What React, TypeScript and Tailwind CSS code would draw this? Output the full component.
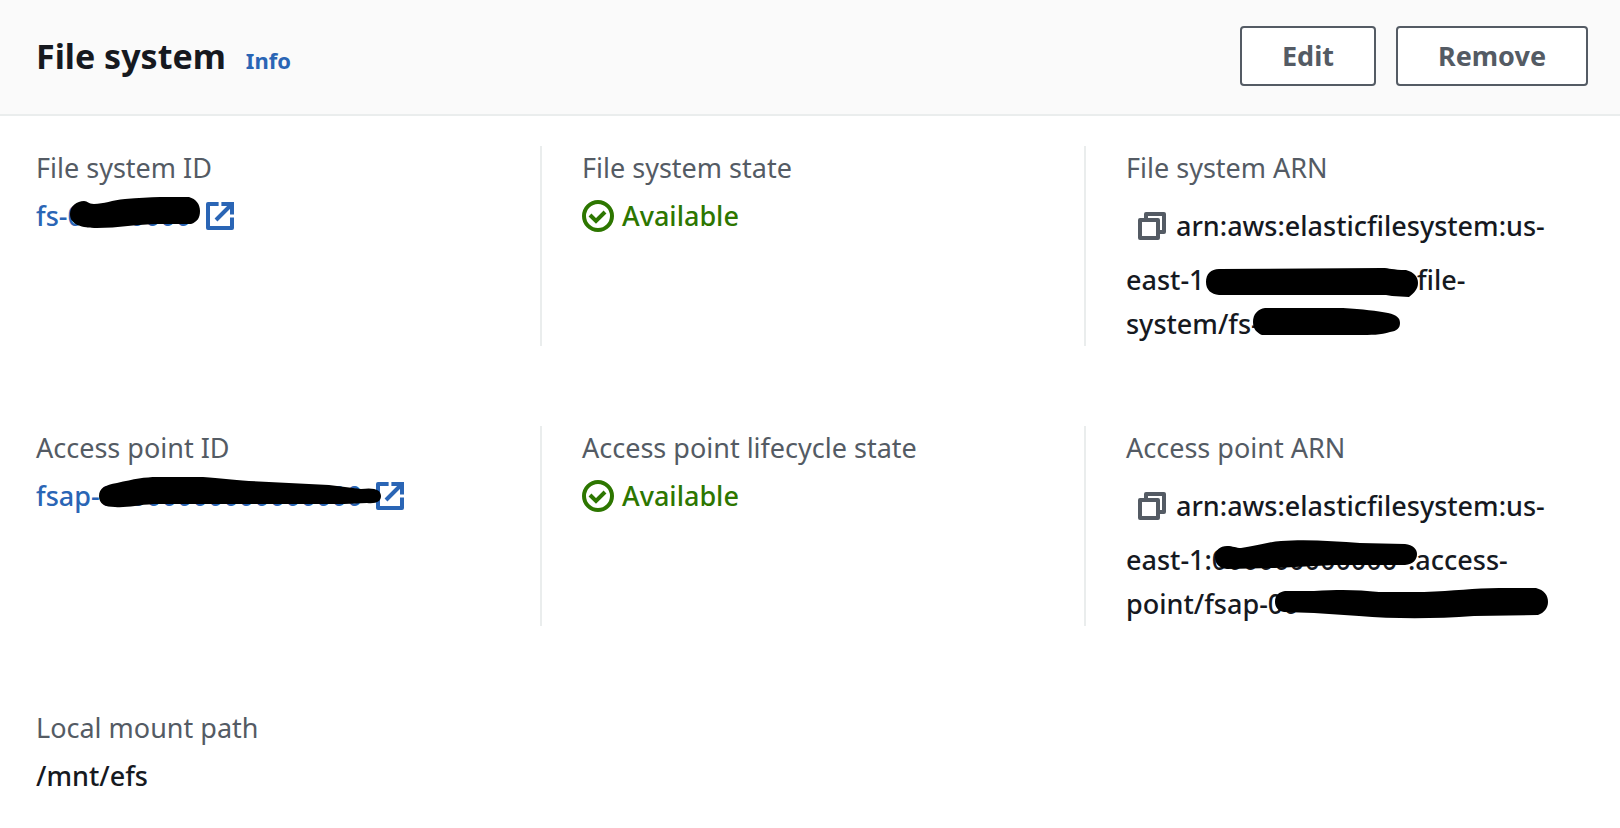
import React from "react";

type Stroke = { width: number; height: number; className: string; d: string };

const strokes = {
  fileSystemId: {
    width: 132,
    height: 34,
    className: "left-[34px] top-[3px]",
    d: "M0 17 C0 9 7 4 14 4 C18 4 18 7 24 7 C34 7 42 3 55 2 C68 1 80 0 90 0 L119 0 C126 2 130 7 130 14 C130 21 127 25 121 27 L88 27 C68 27 48 31 27 31 C12 31 0 28 0 17 Z",
  },
  accessPointId: {
    width: 284,
    height: 32,
    className: "left-[63px] top-[3px]",
    d: "M0 19 C0 11 6 8 18 6 C35 2 46 0 58 0 L104 0 C122 1 132 3 150 4 L230 8 L262 12 C276 10 282 13 282 19 C282 24 278 27 268 26 L245 27 L55 27 C38 28 27 31 16 30 C6 30 0 27 0 19 Z",
  },
  fileSystemArnAccount: {
    width: 214,
    height: 31,
    className: "left-[80px] top-[10px]",
    d: "M0 14 C0 6 5 1 13 1 L176 0 C184 0 186 2 200 2 C208 4 212 9 212 15 C212 21 208 25 203 29 L186 28 L180 27 L13 27 C5 26 0 22 0 14 Z",
  },
  fileSystemArnId: {
    width: 149,
    height: 29,
    className: "left-[127px] top-[6px]",
    d: "M0 14 C0 6 5 1 12 0 L90 0 C110 1 124 3 135 5 C144 7 147 10 147 15 C147 20 144 23 137 24 C128 27 118 27 105 27 L9 27 C4 25 0 21 0 14 Z",
  },
  accessPointArnAccount: {
    width: 203,
    height: 30,
    className: "left-[89px] top-[2px]",
    d: "M0 17 C0 10 5 6 12 6 C18 6 21 8 26 8 C42 6 52 2 66 1 C90 -1 120 1 145 3 L190 4 C198 5 202 9 202 14 C202 20 198 24 190 25 L120 25 L60 28 L12 29 C4 28 0 24 0 17 Z",
  },
  accessPointArnId: {
    width: 276,
    height: 32,
    className: "left-[148px] top-[6px]",
    d: "M1 14 C1 7 5 4 11 3 L40 3 C70 1 85 2 105 4 L150 4 C180 3 200 0 225 0 L262 0 C270 2 274 7 274 14 C274 20 270 25 264 27 L200 28 C160 31 120 31 85 28 L40 25 L10 24 C4 23 1 19 1 14 Z",
  },
};

function Redaction({ width, height, className, d }: Stroke) {
  return (
    <svg
      aria-hidden="true"
      width={width}
      height={height}
      viewBox={`0 0 ${width} ${height}`}
      className={`absolute ${className}`}
    >
      <path d={d} fill="#000" />
    </svg>
  );
}

function ExternalIcon() {
  return (
    <svg
      aria-hidden="true"
      viewBox="0 0 32 32"
      className="size-8 shrink-0"
      fill="none"
      stroke="currentColor"
      strokeWidth="4"
    >
      <path d="M14.6 4H4v24h24V17.4" strokeLinejoin="round" />
      <path d="M17.4 4H28v10.6M28 4 12 20" />
    </svg>
  );
}

function CheckIcon() {
  return (
    <svg
      aria-hidden="true"
      viewBox="0 0 32 32"
      className="size-8 shrink-0"
      fill="none"
      stroke="currentColor"
      strokeWidth="4"
    >
      <circle cx="16" cy="16" r="14" />
      <path d="m8 15 6 6 9-9" />
    </svg>
  );
}

function CopyIcon() {
  return (
    <svg
      aria-hidden="true"
      viewBox="0 0 32 32"
      className="size-8"
      fill="none"
      stroke="currentColor"
      strokeWidth="4"
      strokeLinejoin="round"
    >
      <path d="M4 10h18v18H4z" />
      <path d="M10 10V4h18v18h-6" />
    </svg>
  );
}

function Field({
  label,
  divided = true,
  children,
}: {
  label: string;
  divided?: boolean;
  children: React.ReactNode;
}) {
  return (
    <div className={divided ? "border-l-2 border-[#eaeded] pl-10" : ""}>
      <dt className="text-[#545b64]">{label}</dt>
      <dd className="mt-1 font-medium">{children}</dd>
    </div>
  );
}

function Available() {
  return (
    <span className="flex items-center gap-2 text-[#2d7600]">
      <CheckIcon />
      Available
    </span>
  );
}

function ArnStart({ label }: { label: string }) {
  return (
    <div className="flex h-16 items-center gap-2 pl-[10px]">
      <button type="button" aria-label={label} className="text-[#545b64]">
        <CopyIcon />
      </button>
      <span>arn:aws:elasticfilesystem:us-</span>
    </div>
  );
}

function HeaderButton({ children }: { children: React.ReactNode }) {
  return (
    <button
      type="button"
      className="h-[60px] rounded-[4px] border-2 border-[#545b64] bg-white px-10 font-bold text-[#545b64]"
    >
      {children}
    </button>
  );
}

export default function App() {
  return (
    <section className="min-h-screen bg-white font-['Noto_Sans',sans-serif] text-[27px] leading-[44px] text-[#16191f]">
      <header className="flex items-start justify-between border-b-2 border-[#eaeded] bg-[#fafafa] pt-[26px] pr-8 pb-7 pl-9">
        <div className="flex items-baseline gap-5 pt-2">
          <h2 className="text-[34px] font-bold">File system</h2>
          <a href="#info" className="text-[22px] font-bold text-[#2a65b5]">
            Info
          </a>
        </div>
        <div className="flex gap-5">
          <HeaderButton>Edit</HeaderButton>
          <HeaderButton>Remove</HeaderButton>
        </div>
      </header>

      <dl className="grid grid-cols-[504fr_544fr_536fr] gap-y-20 pt-[30px] pb-5 pl-9">
        <Field label="File system ID" divided={false}>
          <a href="#file-system" className="relative flex items-center text-[#2a65b5]">
            <span className="w-[168px]">fs-00000000</span>
            <ExternalIcon />
            <Redaction {...strokes.fileSystemId} />
          </a>
        </Field>
        <Field label="File system state">
          <Available />
        </Field>
        <Field label="File system ARN">
          <ArnStart label="Copy file system ARN" />
          <div className="relative flex">
            <span className="w-[291px]">east-1</span>
            <span>file-</span>
            <Redaction {...strokes.fileSystemArnAccount} />
          </div>
          <div className="relative">
            system/fs-
            <Redaction {...strokes.fileSystemArnId} />
          </div>
        </Field>

        <Field label="Access point ID" divided={false}>
          <a href="#access-point" className="relative flex items-center text-[#2a65b5]">
            <span className="w-[338px]">fsap-00000000000000000</span>
            <ExternalIcon />
            <Redaction {...strokes.accessPointId} />
          </a>
        </Field>
        <Field label="Access point lifecycle state">
          <Available />
        </Field>
        <Field label="Access point ARN">
          <ArnStart label="Copy access point ARN" />
          <div className="relative flex">
            <span className="w-[282px]">east-1:000000000000</span>
            <span>:access-</span>
            <Redaction {...strokes.accessPointArnAccount} />
          </div>
          <div className="relative">
            point/fsap-00
            <Redaction {...strokes.accessPointArnId} />
          </div>
        </Field>

        <Field label="Local mount path" divided={false}>
          /mnt/efs
        </Field>
      </dl>
    </section>
  );
}
